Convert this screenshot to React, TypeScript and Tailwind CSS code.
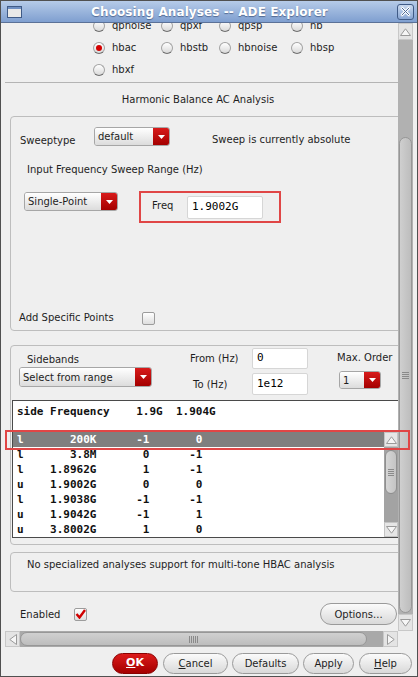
import React from "react";

const UI = "font-['DejaVu_Sans',sans-serif]";
const MONO = "font-['DejaVu_Sans_Mono',monospace]";

function Radio({ on }: { on?: boolean }) {
  return (
    <span className="w-[12px] h-[12px] rounded-full border border-[#a3a3a3] border-b-[#6f6f6f] bg-gradient-to-b from-[#ffffff] to-[#d9d9d9] flex items-center justify-center shrink-0">
      {on && <span className="w-[6px] h-[6px] rounded-full bg-[#d40000]" />}
    </span>
  );
}

function Drop({ cls, text }: { cls: string; text: string }) {
  return (
    <div className={`flex rounded-[3px] border border-[#a6a6a6] overflow-hidden shrink-0 ${cls}`}>
      <div className="flex-1 flex items-center pl-[3px] bg-gradient-to-b from-white to-[#dcdcdc] text-[10px] text-[#1e1e1e] whitespace-nowrap overflow-hidden">
        {text}
      </div>
      <div className="w-[16px] flex items-center justify-center bg-gradient-to-b from-[#d81a1a] to-[#a40000]">
        <svg width="7" height="4" viewBox="0 0 7 4">
          <path d="M0 0 L7 0 L3.5 4 Z" fill="white" />
        </svg>
      </div>
    </div>
  );
}

function Check({ on }: { on?: boolean }) {
  return (
    <span className="w-[13px] h-[13px] rounded-[2px] border border-[#9c9c9c] bg-gradient-to-b from-white to-[#dedede] flex items-center justify-center shrink-0">
      {on && (
        <svg width="11" height="10" viewBox="0 0 11 10">
          <path d="M1.5 5 L4.5 8.5 L10 1" stroke="#d00000" strokeWidth="2.4" fill="none" />
        </svg>
      )}
    </span>
  );
}

function Btn({ cls, children }: { cls: string; children: React.ReactNode }) {
  return (
    <div
      className={`h-[21px] rounded-full border border-[#9a9a9a] bg-gradient-to-b from-[#fbfbfb] to-[#d9d9d9] flex items-center justify-center text-[10px] text-[#1e1e1e] shrink-0 ${cls}`}
    >
      {children}
    </div>
  );
}

const rows: [string, string, string, string][] = [
  ["l", "200K", "-1", "0"],
  ["l", "3.8M", "0", "-1"],
  ["l", "1.8962G", "1", "-1"],
  ["u", "1.9002G", "0", "0"],
  ["l", "1.9038G", "-1", "-1"],
  ["u", "1.9042G", "-1", "1"],
  ["u", "3.8002G", "1", "0"],
];

function fmt(r: [string, string, string, string]) {
  return r[0] + r[1].padStart(11) + r[2].padStart(8) + r[3].padStart(8);
}

function UpTri() {
  return (
    <svg width="11" height="8" viewBox="0 0 11 8">
      <path d="M0.5 7.5 L5.5 0.8 L10.5 7.5 Z" fill="#f6f6f6" stroke="#9a9a9a" strokeWidth="1" />
    </svg>
  );
}
function DownTri() {
  return (
    <svg width="11" height="8" viewBox="0 0 11 8">
      <path d="M0.5 0.5 L5.5 7.2 L10.5 0.5 Z" fill="#f6f6f6" stroke="#9a9a9a" strokeWidth="1" />
    </svg>
  );
}
function LeftTri() {
  return (
    <svg width="8" height="11" viewBox="0 0 8 11">
      <path d="M7.5 0.5 L0.8 5.5 L7.5 10.5 Z" fill="#f6f6f6" stroke="#9a9a9a" strokeWidth="1" />
    </svg>
  );
}
function RightTri() {
  return (
    <svg width="8" height="11" viewBox="0 0 8 11">
      <path d="M0.5 0.5 L7.2 5.5 L0.5 10.5 Z" fill="#f6f6f6" stroke="#9a9a9a" strokeWidth="1" />
    </svg>
  );
}

function RadioCell({ w, label, on }: { w: string; label: string; on?: boolean }) {
  return (
    <div className={`flex items-center ${w}`}>
      <Radio on={on} />
      <span className="ml-[7px] text-[10px] text-[#1e1e1e] leading-[14px]">{label}</span>
    </div>
  );
}

export default function App() {
  return (
    <div className={`${UI} w-[418px] h-[677px] bg-[#efefef] border border-[#505050] flex flex-col relative overflow-hidden`}>
      {/* Title bar */}
      <div className="h-[22px] shrink-0 flex items-center bg-gradient-to-b from-[#b6cbe8] to-[#7f9fd0] border-b border-[#5b7197] relative">
        <div className="ml-[6px] w-[15px] h-[12px] border border-[#3f5a86] bg-[#e8e8e8] flex flex-col">
          <div className="h-[2px] bg-[#6f8fc2]" />
        </div>
        <div className="flex-1 text-center text-white font-bold text-[12px] tracking-[0.1px] [text-shadow:0_1px_1px_rgba(40,60,100,0.6)]">
          Choosing Analyses -- ADE Explorer
        </div>
        <div className="mr-[3px] w-[17px] h-[16px] rounded-[3px] border border-[#3f5a86] bg-gradient-to-b from-[#c8d8ee] to-[#8aa7d4] flex items-center justify-center">
          <svg width="11" height="11" viewBox="0 0 11 11">
            <path d="M2 2 L9 9 M9 2 L2 9" stroke="#ffffff" strokeWidth="2.6" strokeLinecap="round" />
            <path d="M2 2 L9 9 M9 2 L2 9" stroke="#4a6896" strokeWidth="1" strokeLinecap="round" />
          </svg>
        </div>
      </div>

      {/* Main area */}
      <div className="h-[608px] shrink-0 flex">
        <div className="ml-[1px] w-[396px] overflow-hidden">
          <div className="-mt-[8px] flex flex-col">
            {/* radio rows */}
            <div className="h-[22px] flex items-center ml-[91px]">
              <RadioCell w="w-[68px]" label="qpnoise" />
              <RadioCell w="w-[58px]" label="qpxf" />
              <RadioCell w="w-[72px]" label="qpsp" />
              <RadioCell w="w-[60px]" label="hb" />
            </div>
            <div className="h-[22px] flex items-center ml-[91px]">
              <RadioCell w="w-[68px]" label="hbac" on />
              <RadioCell w="w-[58px]" label="hbstb" />
              <RadioCell w="w-[72px]" label="hbnoise" />
              <RadioCell w="w-[60px]" label="hbsp" />
            </div>
            <div className="h-[22px] flex items-center ml-[91px]">
              <RadioCell w="w-[68px]" label="hbxf" />
            </div>
            <div className="mt-[1px] ml-[3px] h-[1px] bg-[#b4b4b4]" />
            <div className="mt-[10px] h-[14px] leading-[14px] text-[10px] text-[#1e1e1e] text-center pr-[4px]">
              Harmonic Balance AC Analysis
            </div>

            {/* Box 1 */}
            <div className="mt-[9px] ml-[8px] w-[400px] h-[215px] rounded-[4px] border border-[#bdbdbd] flex flex-col text-[10px] text-[#1e1e1e]">
              <div className="mt-[10px] ml-[9px] h-[19px] flex items-start">
                <div className="w-[74px] mt-[7px] leading-[14px]">Sweeptype</div>
                <Drop cls="w-[76px] h-[19px]" text="default" />
                <div className="ml-[42px] mt-[6px] leading-[14px]">Sweep is currently absolute</div>
              </div>
              <div className="mt-[17px] ml-[16px] leading-[14px] h-[14px]">Input Frequency Sweep Range (Hz)</div>
              <div className="mt-[14px] ml-[13px] flex items-start">
                <Drop cls="w-[94px] h-[19px] mt-[1px]" text="Single-Point" />
                <div className="ml-[21px] w-[142px] h-[32px] border-2 border-[#e04646] flex items-start">
                  <div className="ml-[11px] w-[35px] mt-[6px] leading-[14px]">Freq</div>
                  <div className={`${MONO} mt-[3px] w-[76px] h-[23px] bg-white border border-[#d6d6d6] rounded-[2px] flex items-center pl-[4px] text-[11px] text-black`}>
                    1.9002G
                  </div>
                </div>
              </div>
              <div className="flex-1" />
              <div className="mb-[5px] ml-[8px] h-[14px] flex items-center">
                <div className="w-[123px] leading-[14px]">Add Specific Points</div>
                <Check />
              </div>
            </div>

            {/* Box 2 */}
            <div className="mt-[14px] ml-[8px] w-[400px] h-[200px] rounded-[4px] border border-[#bdbdbd] flex flex-col text-[10px] text-[#1e1e1e]">
              <div className="h-[54px] flex items-start">
                <div className="ml-[8px] w-[133px] flex flex-col">
                  <div className="mt-[7px] pl-[8px] leading-[14px] h-[14px]">Sidebands</div>
                  <Drop cls="w-[133px] h-[20px]" text="Select from range" />
                </div>
                <div className="ml-[38px] mt-[2px] flex flex-col">
                  <div className="h-[21px] flex items-center">
                    <div className="w-[62px]">From (Hz)</div>
                    <div className={`${MONO} w-[56px] h-[21px] bg-white border border-[#d6d6d6] rounded-[2px] flex items-center pl-[4px] text-[11px] text-black`}>0</div>
                  </div>
                  <div className="mt-[4px] h-[22px] flex items-center">
                    <div className="ml-[3px] w-[59px]">To (Hz)</div>
                    <div className={`${MONO} w-[56px] h-[22px] bg-white border border-[#d6d6d6] rounded-[2px] flex items-center pl-[4px] text-[11px] text-black`}>1e12</div>
                  </div>
                </div>
                <div className="ml-[29px] mt-[5px] flex flex-col">
                  <div className="leading-[14px] h-[14px] whitespace-nowrap">Max. Order</div>
                  <Drop cls="ml-[2px] mt-[6px] w-[42px] h-[18px]" text="1" />
                </div>
              </div>
              {/* listbox */}
              <div className={`${MONO} ml-[1px] w-[387px] h-[138px] border border-[#4a4a4a] bg-white flex flex-col text-[11px] font-bold text-[#111]`}>
                <div className="mt-[3px] h-[15px] leading-[15px] pl-[4px] whitespace-pre">side Frequency    1.9G  1.904G</div>
                <div className="h-[13px]" />
                <div className="flex">
                  <div className="flex-1 flex flex-col">
                    {rows.map((r, i) => (
                      <div
                        key={i}
                        className={`h-[15px] leading-[15px] pl-[4px] whitespace-pre ${i === 0 ? "bg-[#7f7f7f] text-white" : ""}`}
                      >
                        {fmt(r)}
                      </div>
                    ))}
                  </div>
                  <div className="w-[14px] flex flex-col bg-[#a3a3a3]">
                    <div className="h-[15px] bg-[#e6e6e6] border border-[#c4c4c4] flex items-center justify-center">
                      <UpTri />
                    </div>
                    <div className="mt-[3px] h-[44px] mx-[1px] rounded-full bg-gradient-to-r from-[#d6d6d6] to-[#c4c4c4] border border-[#8f8f8f] flex flex-col items-center justify-center gap-[1px]">
                      <div className="w-[6px] h-[1px] bg-[#8a8a8a]" />
                      <div className="w-[6px] h-[1px] bg-[#8a8a8a]" />
                      <div className="w-[6px] h-[1px] bg-[#8a8a8a]" />
                      <div className="w-[6px] h-[1px] bg-[#8a8a8a]" />
                    </div>
                    <div className="flex-1" />
                    <div className="h-[15px] bg-[#e6e6e6] border border-[#c4c4c4] flex items-center justify-center">
                      <DownTri />
                    </div>
                  </div>
                </div>
              </div>
            </div>

            {/* Box 3 */}
            <div className="mt-[7px] ml-[8px] w-[400px] h-[40px] rounded-[4px] border border-[#bdbdbd] pl-[16px] pt-[5px] text-[10px] text-[#1e1e1e] leading-[14px]">
              No specialized analyses support for multi-tone HBAC analysis
            </div>

            {/* Enabled row */}
            <div className="mt-[11px] h-[22px] flex items-center text-[10px] text-[#1e1e1e]">
              <div className="ml-[18px] w-[54px]">Enabled</div>
              <Check on />
              <div className="flex-1" />
              <Btn cls="w-[77px] h-[22px] mr-[1px]">Options...</Btn>
            </div>
          </div>
        </div>

        {/* vertical scrollbar */}
        <div className="w-[15px] flex flex-col bg-[#b1b1b1]">
          <div className="h-[17px] bg-[#e4e4e4] border border-[#c8c8c8] flex items-center justify-center">
            <UpTri />
          </div>
          <div className="flex-1 flex flex-col pt-[97px] pb-[1px]">
            <div className="flex-1 mx-[1px] rounded-full bg-gradient-to-r from-[#cfcfcf] to-[#bdbdbd] border border-[#979797] flex flex-col items-center justify-center gap-[1px]">
              <div className="w-[7px] h-[1px] bg-[#8a8a8a]" />
              <div className="w-[7px] h-[1px] bg-[#8a8a8a]" />
              <div className="w-[7px] h-[1px] bg-[#8a8a8a]" />
              <div className="w-[7px] h-[1px] bg-[#8a8a8a]" />
            </div>
          </div>
          <div className="h-[17px] bg-[#e4e4e4] border border-[#c8c8c8] flex items-center justify-center">
            <DownTri />
          </div>
        </div>
      </div>

      {/* horizontal scrollbar */}
      <div className="h-[16px] shrink-0 ml-[4px] w-[393px] flex bg-[#a9a9a9]">
        <div className="w-[15px] bg-[#e4e4e4] border border-[#c8c8c8] flex items-center justify-center">
          <LeftTri />
        </div>
        <div className="w-[347px] my-[1px] rounded-full bg-gradient-to-b from-[#d0d0d0] to-[#bdbdbd] border border-[#979797] flex items-center justify-center gap-[1px]">
          <div className="w-[1px] h-[7px] bg-[#8a8a8a]" />
          <div className="w-[1px] h-[7px] bg-[#8a8a8a]" />
          <div className="w-[1px] h-[7px] bg-[#8a8a8a]" />
          <div className="w-[1px] h-[7px] bg-[#8a8a8a]" />
          <div className="w-[1px] h-[7px] bg-[#8a8a8a]" />
        </div>
        <div className="flex-1" />
        <div className="w-[15px] bg-[#e4e4e4] border border-[#c8c8c8] flex items-center justify-center">
          <RightTri />
        </div>
      </div>

      {/* button row */}
      <div className="flex-1 flex items-start justify-end pt-[6px] pr-[5px]">
        <div className="w-[46px] h-[21px] rounded-full border border-[#8a0000] bg-gradient-to-b from-[#dc1a1a] to-[#a50000] flex items-center justify-center text-white font-bold text-[11px]">
          <span><span className="underline">O</span>K</span>
        </div>
        <Btn cls="ml-[5px] w-[65px]"><span><span className="underline">C</span>ancel</span></Btn>
        <Btn cls="ml-[4px] w-[67px]">Defaults</Btn>
        <Btn cls="ml-[4px] w-[51px]">Apply</Btn>
        <Btn cls="ml-[5px] w-[53px]"><span><span className="underline">H</span>elp</span></Btn>
      </div>

      {/* annotation overlay on the selected sideband row */}
      <div className="absolute left-[4px] top-[429px] w-[405px] h-[20px] border-2 border-[#e04646] pointer-events-none" />
    </div>
  );
}
